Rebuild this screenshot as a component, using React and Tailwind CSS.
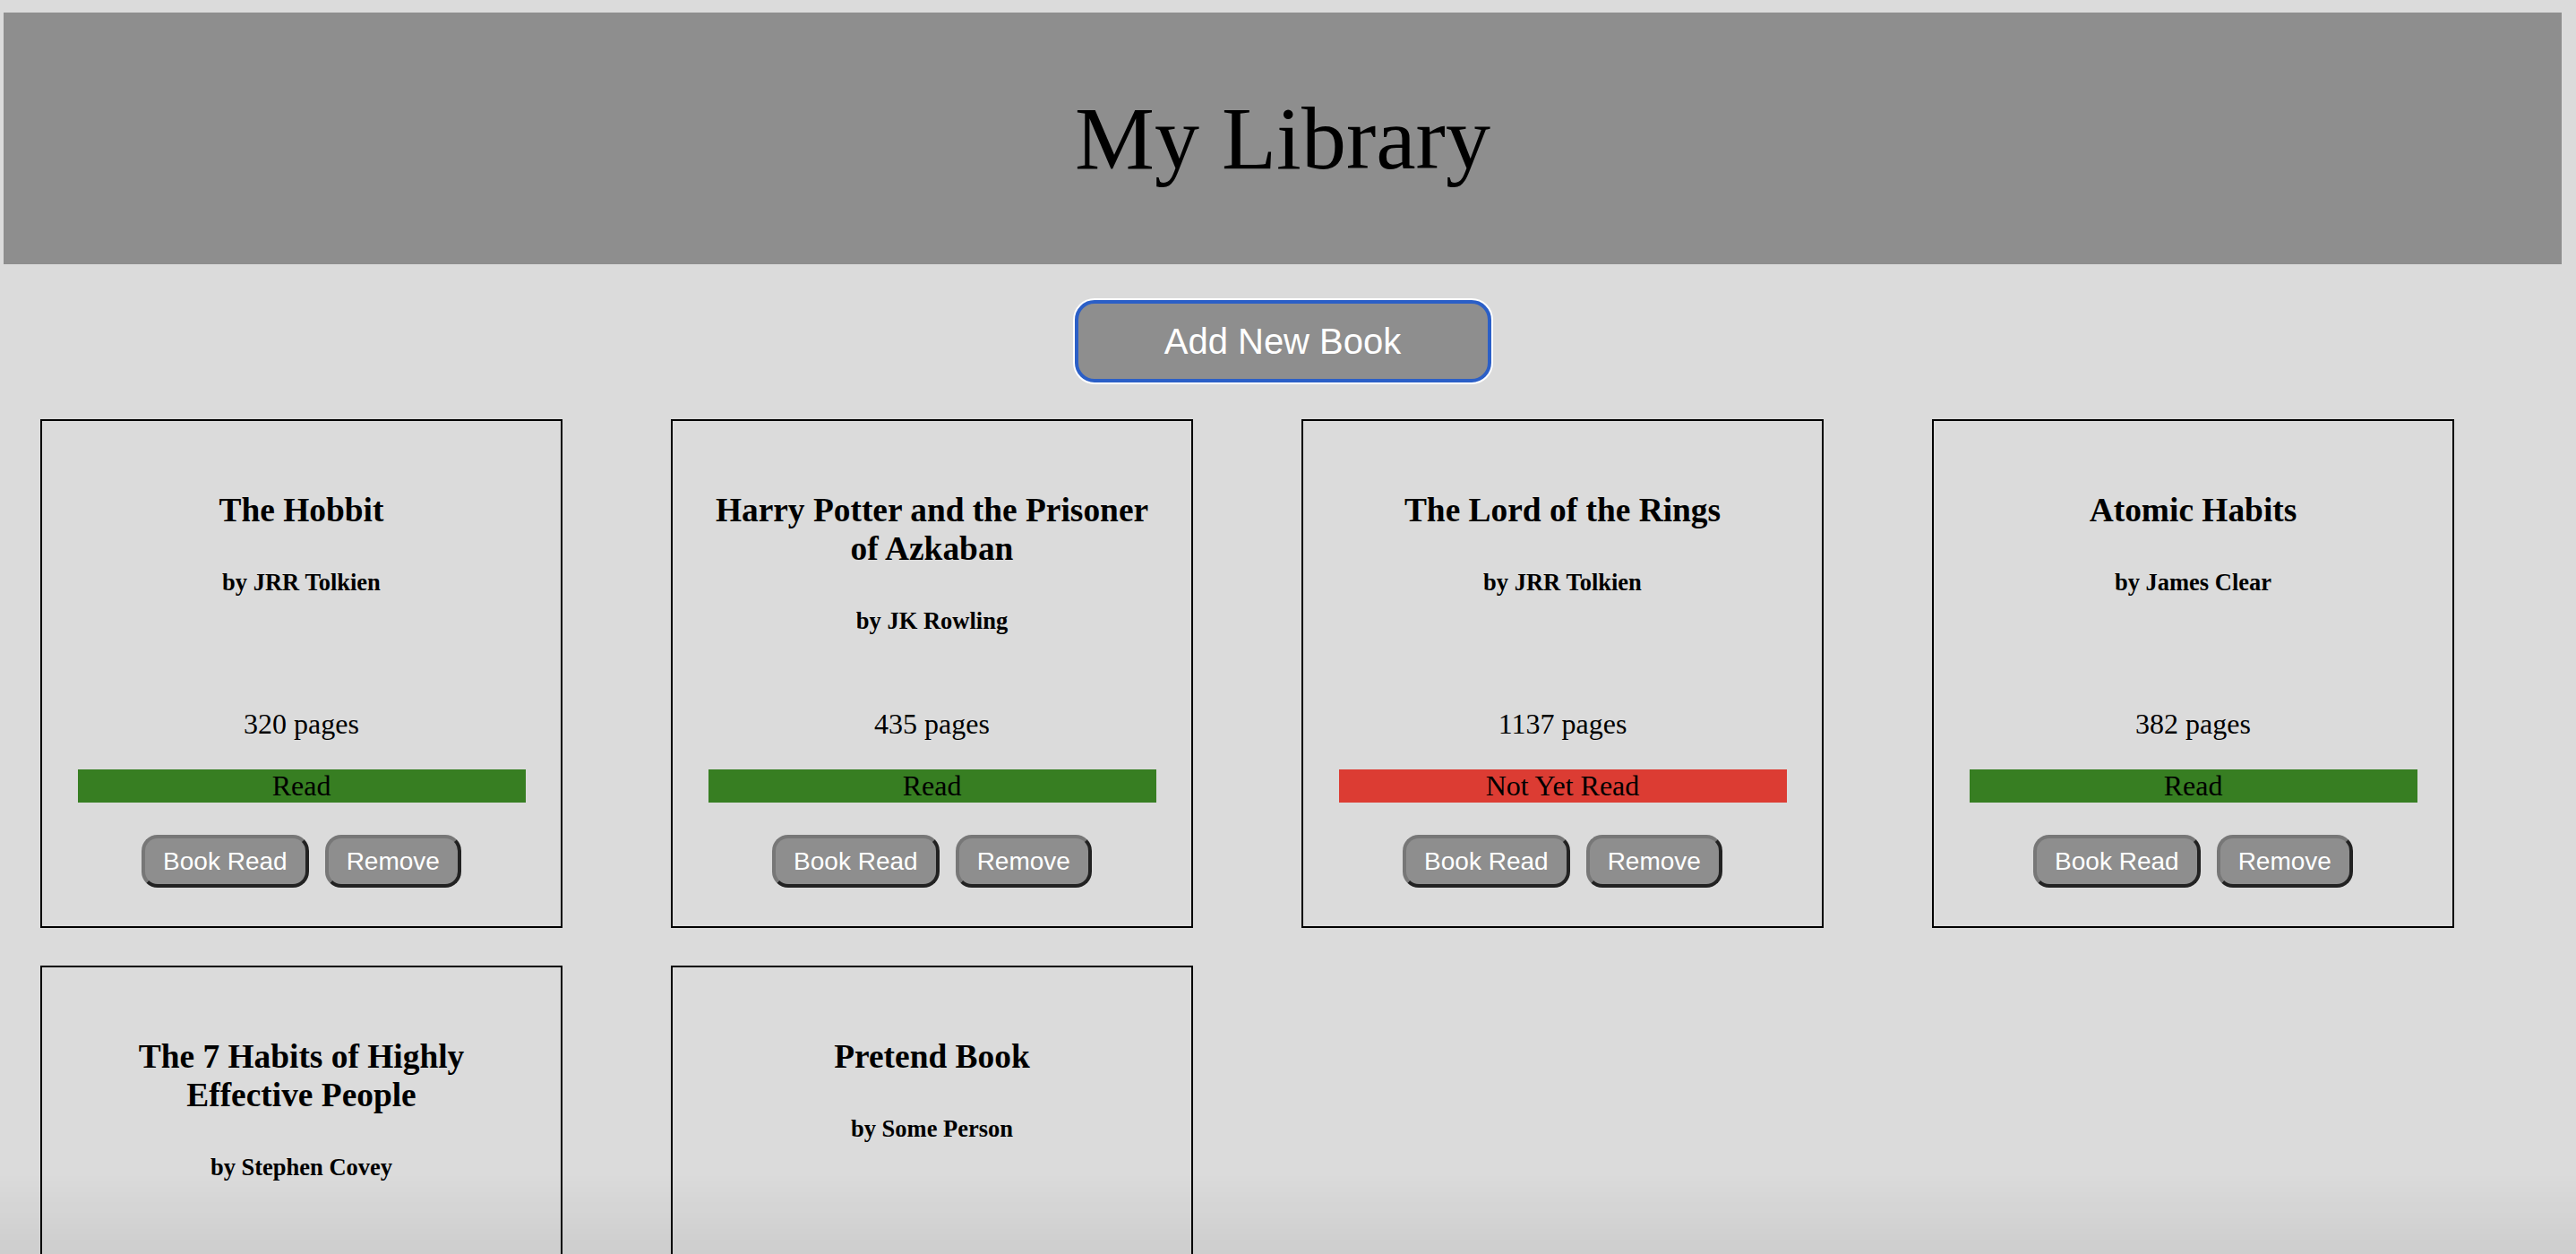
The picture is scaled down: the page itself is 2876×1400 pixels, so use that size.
import React from 'react';

const books = [
  { id: 1, title: 'The Hobbit', author: 'JRR Tolkien', pages: 320, read: true },
  { id: 2, title: 'Harry Potter and the Prisoner of Azkaban', author: 'JK Rowling', pages: 435, read: true },
  { id: 3, title: 'The Lord of the Rings', author: 'JRR Tolkien', pages: 1137, read: false },
  { id: 4, title: 'Atomic Habits', author: 'James Clear', pages: 382, read: true },
  { id: 5, title: 'The 7 Habits of Highly Effective People', author: 'Stephen Covey', pages: 381, read: true },
  { id: 6, title: 'Pretend Book', author: 'Some Person', pages: 100, read: false },
];

const SERIF = "font-['Liberation_Serif','Times_New_Roman',serif]";
const SANS = "font-['Liberation_Sans',Arial,sans-serif]";

const SmallButton = ({ children }) => (
  <button
    className={`${SANS} h-[59px] px-[20px] rounded-[18px] bg-[#8e8e8e] text-white text-[28px] leading-[32px] border-[4px] border-t-[#777777] border-l-[#777777] border-b-[#222222] border-r-[#222222]`}
  >
    {children}
  </button>
);

const BookCard = ({ book }) => (
  <div className="border-2 border-black px-[40px] pt-[40px] pb-[43px] flex flex-col items-center text-center text-black">
    <div className="flex-1 flex flex-col items-center w-full">
      <div className={`${SERIF} mt-[38px] text-[37.4px] leading-[43px] font-bold w-full`}>
        {book.title}
      </div>
      <div className={`${SERIF} mt-[44px] text-[26.5px] leading-[30px] font-bold`}>
        by {book.author}
      </div>
    </div>
    <div className={`${SERIF} mt-[82px] text-[32px] leading-[37px]`}>{book.pages} pages</div>
    <div
      className={`${SERIF} mt-[32px] w-[500px] h-[37px] text-[32px] leading-[37px] ${
        book.read ? 'bg-[#377e22]' : 'bg-[#dc3c33]'
      }`}
    >
      {book.read ? 'Read' : 'Not Yet Read'}
    </div>
    <div className="mt-[36px] flex gap-[18px]">
      <SmallButton>Book Read</SmallButton>
      <SmallButton>Remove</SmallButton>
    </div>
  </div>
);

export default function App() {
  return (
    <div className="min-h-screen bg-[#dbdbdb] pt-[14px] pl-[4px] pr-[16px] pb-[40px]">
      <header className="h-[281px] bg-[#8e8e8e] flex items-center justify-center">
        <h1 className={`${SERIF} text-[100px] leading-none text-black`}>My Library</h1>
      </header>

      <div className="flex justify-center mt-[40px]">
        <button
          className={`${SANS} w-[465px] h-[92px] rounded-[22px] bg-[#8e8e8e] text-white text-[40px] border-[4px] border-[#2b5fc7] ring-2 ring-white`}
        >
          Add New Book
        </button>
      </div>

      <div className="mt-[41px] pl-[41px] grid grid-cols-[repeat(4,583px)] gap-x-[121px] gap-y-[42px]">
        {books.map(b => (
          <BookCard key={b.id} book={b} />
        ))}
      </div>

      {/* window shadow at the bottom of the shot */}
      <div className="pointer-events-none fixed left-0 right-0 bottom-0 h-[90px] bg-gradient-to-b from-transparent to-black/[0.06]" />
    </div>
  );
}
